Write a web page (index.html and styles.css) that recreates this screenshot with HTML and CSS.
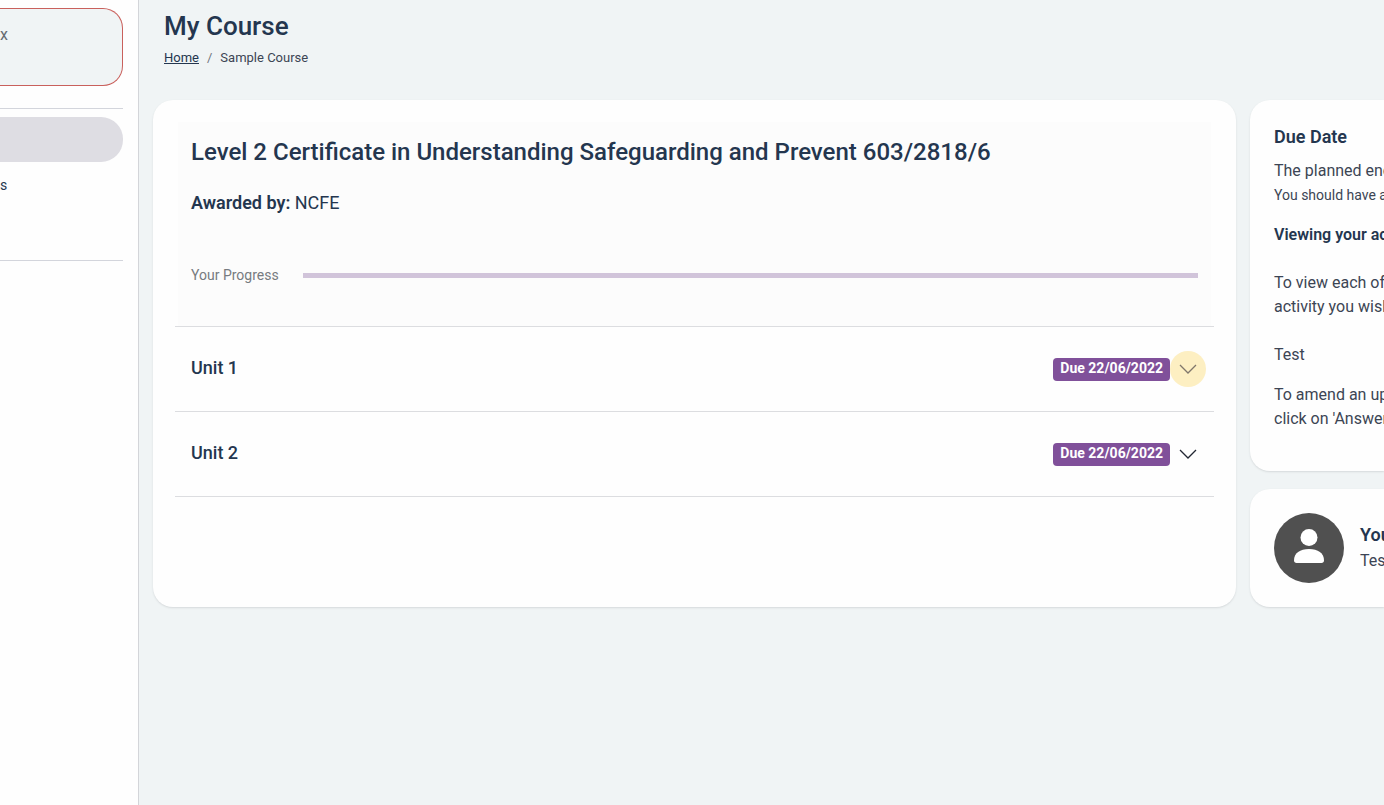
FILE: index.html
```html
<!DOCTYPE html>
<html lang="en">
<head>
<meta charset="utf-8">
<title>My Course</title>
<link rel="stylesheet" href="styles.css">
</head>
<body>
<div class="app">
  <aside class="sidebar">
    <div class="profile">x</div>
    <nav class="nav" aria-label="Main">
      <a class="nav-item active" href="#" aria-label="Current page"></a>
      <a class="nav-item" href="#">s</a>
    </nav>
  </aside>
  <main class="main">
    <header class="page-header">
      <h1>My Course</h1>
      <nav class="breadcrumb" aria-label="Breadcrumb">
        <a href="#">Home</a><span class="slash">/</span><span>Sample Course</span>
      </nav>
    </header>
    <div class="columns">
      <section class="card course">
        <div class="summary">
          <h2>Level 2 Certificate in Understanding Safeguarding and Prevent 603/2818/6</h2>
          <p class="award"><strong>Awarded by:</strong> NCFE</p>
          <div class="progress-row">
            <span>Your Progress</span>
            <div class="progress" role="progressbar" aria-label="Your Progress" aria-valuenow="0"></div>
          </div>
        </div>
        <div class="unit">
          <h3>Unit 1</h3>
          <span class="badge">Due 22/06/2022</span>
          <button class="toggle highlighted" aria-label="Expand Unit 1"><svg viewBox="0 0 18 18"><path d="M1 5l8 8 8-8"/></svg></button>
        </div>
        <div class="unit">
          <h3>Unit 2</h3>
          <span class="badge">Due 22/06/2022</span>
          <button class="toggle" aria-label="Expand Unit 2"><svg viewBox="0 0 18 18"><path d="M1 5l8 8 8-8"/></svg></button>
        </div>
      </section>
      <div class="side">
        <section class="card info">
          <h3>Due Date</h3>
          <p>The planned end</p>
          <p class="small">You should have a</p>
          <h4>Viewing your act</h4>
          <p class="block">To view each of<br>activity you wish</p>
          <p class="block">Test</p>
          <p class="amend">To amend an upd<br>click on 'Answer</p>
        </section>
        <section class="card assessor">
          <svg class="avatar" viewBox="0 0 70 70" aria-hidden="true"><circle class="disc" cx="35" cy="35" r="35"/><circle cx="35" cy="24.500" r="8.500"/><path d="M20 47.500C20 40 26 36 35 36s15 4 15 11.500c0 1.500-1 2.500-2.500 2.500h-25C21 50 20 49 20 47.500z"/></svg>
          <div class="assessor-text">
            <h3>Your</h3>
            <p>Test</p>
          </div>
        </section>
      </div>
    </div>
  </main>
</div>
</body>
</html>
```
FILE: styles.css
```css
* { box-sizing: border-box; }
body {
  margin: 0;
  background: #f0f4f5;
  color: #3c4554;
  font: 400 16px/24px Roboto, sans-serif;
}
h1, h2, h3, h4, p { margin: 0; }
h1, h2, h3, h4 { color: #24364f; font-weight: 500; }
.app {
  display: grid;
  grid-template-columns: 139px minmax(0, 1fr);
  min-height: 100vh;
  overflow: hidden;
}
.sidebar {
  background: #fefefe;
  border-right: 1px solid #d3d5d9;
  padding: 8px 15px 0 0;
}
.profile {
  height: 78px;
  padding: 14px 0;
  border: 1px solid #c9605c;
  border-left: 0;
  border-radius: 0 20px 20px 0;
  background: #f0f4f5;
  color: #666b70;
}
.nav {
  margin-top: 22px;
  padding: 8px 0 53px;
  border: solid #d3d5dc;
  border-width: 1px 0;
}
.nav-item {
  display: flex;
  align-items: center;
  height: 45px;
  color: #24364f;
  font-size: 14px;
  text-decoration: none;
}
.nav-item.active {
  background: #dedde3;
  border-radius: 0 22px 22px 0;
}
.page-header { padding: 10px 25px 0; }
h1 { font-size: 26px; line-height: 32px; }
.breadcrumb {
  display: flex;
  gap: 8px;
  margin-top: 6px;
  font-size: 13px;
  line-height: 20px;
}
.breadcrumb a { color: #24364f; }
.slash { color: #70767e; }
.columns {
  display: grid;
  grid-template-columns: minmax(0, 1fr) 134px;
  gap: 14px;
  margin-top: 32px;
  padding-left: 14px;
}
.card {
  background: #fefefe;
  border-radius: 20px;
  box-shadow: 0 1px 2px #d5d9db;
}
.course { padding: 22px 22px 24px; }
.summary {
  padding: 14px 16px 41px;
  border-bottom: 1px solid #dcdde0;
  background: linear-gradient(#fcfcfc, #fcfcfc) center / calc(100% - 6px) 100% no-repeat;
}
h2 { font-size: 24px; line-height: 32px; }
.award {
  margin-top: 22px;
  color: #24364f;
  font-size: 18px;
  line-height: 26px;
}
.award strong { font-weight: 600; }
.progress-row {
  display: flex;
  align-items: center;
  gap: 24px;
  margin-top: 49px;
  color: #777b80;
  font-size: 14px;
  line-height: 20px;
}
.progress {
  flex: 1;
  height: 5px;
  background: #d1c4da;
}
.unit {
  display: flex;
  align-items: center;
  height: 85px;
  padding: 0 8px 0 16px;
  border-bottom: 1px solid #dcdde0;
}
.unit h3 {
  flex: 1;
  padding-bottom: 2px;
  font-size: 18px;
  line-height: 24px;
}
.badge {
  padding: 0 7px 2px;
  border-radius: 4px;
  background: #80509a;
  color: #fff;
  font-size: 14px;
  font-weight: 700;
  line-height: 21px;
}
.toggle {
  display: grid;
  place-items: center;
  width: 36px;
  height: 36px;
  padding: 0;
  border: 0;
  border-radius: 50%;
  background: none;
  color: #222733;
}
.toggle svg {
  width: 18px;
  height: 18px;
  fill: none;
  stroke: currentColor;
  stroke-width: 1.3;
}
.toggle.highlighted { background: #fdefc2; color: #80776b; }
.side {
  display: flex;
  flex-direction: column;
  gap: 18px;
  white-space: nowrap;
}
.side .card {
  border-radius: 20px 0 0 20px;
  padding-left: 24px;
}
.side h3 { font-size: 18px; font-weight: 600; }
.info { padding-top: 25px; padding-bottom: 40px; }
.info h3 { margin-bottom: 10px; }
.info .small { font-size: 14px; }
.info h4 { margin-top: 16px; font-size: 16px; font-weight: 600; }
.block { margin-top: 24px; }
.amend { margin-top: 16px; }
.assessor {
  display: flex;
  align-items: center;
  gap: 16px;
  padding-top: 24px;
  padding-bottom: 24px;
}
.assessor-text { display: grid; gap: 2px; }
.avatar { flex: none; width: 70px; height: 70px; fill: #fff; }
.disc { fill: #505050; }
```
